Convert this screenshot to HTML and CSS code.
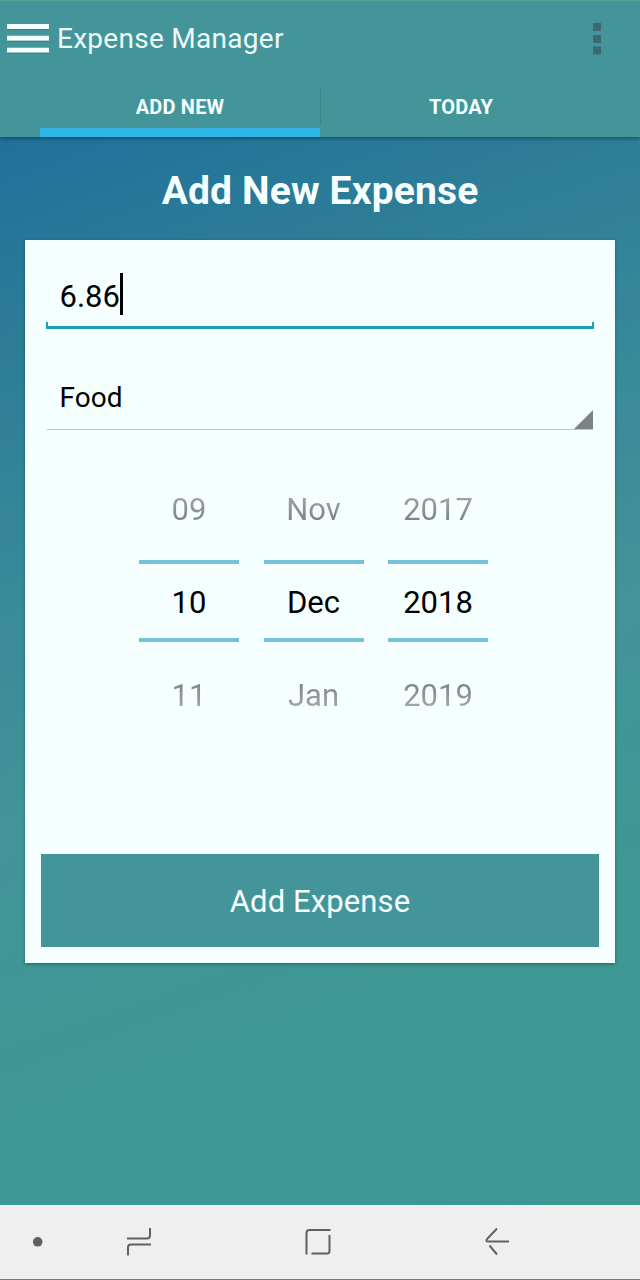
FILE: index.html
```
<!DOCTYPE html>
<html lang="en">
<head>
<meta charset="utf-8">
<title>Expense Manager</title>
<link rel="stylesheet" href="styles.css">
</head>
<body>
<div class="screen">
  <header class="header">
    <div class="bar">
      <svg class="menu" width="42" height="30" viewBox="0 0 42 30"><path d="M0 2.500h42M0 14.300h42M0 26.200h42" stroke="#f6ffff" stroke-width="5"/><path d="M0 5.500h42M0 17.300h42M0 29.200h42" stroke="#357f84"/></svg>
      <span class="title">Expense Manager</span>
      <svg class="more" width="8" height="32" viewBox="0 0 8 32"><path d="M0 0h8v8H0zM0 12h8v8H0zM0 23.500h8v8H0z" fill="#3d6a6d"/></svg>
    </div>
    <nav class="tabs">
      <div class="tab active"><span class="tab-text">ADD NEW</span></div>
      <div class="tab"><span class="tab-text">TODAY</span></div>
    </nav>
  </header>
  <main class="main">
    <h1 class="heading"><span>Add New Expense</span></h1>
    <section class="card">
      <div class="amount"><span class="amount-text">6.86</span><i class="caret"></i></div>
      <div class="select"><span class="select-text">Food</span><svg class="corner" width="19" height="19" viewBox="0 0 19 19"><path d="M19 0v19H0z" fill="#7d8283"/></svg></div>
      <div class="picker">
        <div class="column"><span class="prev">09</span><span class="current">10</span><span class="next">11</span></div>
        <div class="column"><span class="prev">Nov</span><span class="current">Dec</span><span class="next">Jan</span></div>
        <div class="column"><span class="prev">2017</span><span class="current">2018</span><span class="next">2019</span></div>
      </div>
      <div class="submit"><span>Add Expense</span></div>
    </section>
  </main>
  <footer class="navbar">
    <svg width="640" height="74" viewBox="0 0 640 74" fill="none" stroke="#606060" stroke-width="2">
      <circle cx="37.700" cy="36.800" r="4.800" fill="#606060" stroke="none"/>
      <path d="M127 33.500h20q3 0 3-3V23M151 39.500h-20q-3 0-3 3V50.500"/>
      <path d="M306.500 49.500V28q0-3 3-3H330.500M329.500 30V46q0 2.500-2.500 2.500H311.500"/>
      <path d="M497 23.500L487 34q-1.500 2.500 1 2.500H509M489.500 40.500L497 49.500"/>
    </svg>
  </footer>
</div>
</body>
</html>
```
FILE: styles.css
```
* { box-sizing: border-box; }
body { margin: 0; font-family: Roboto, "Liberation Sans", sans-serif; }
.screen { width: 640px; height: 1280px; display: flex; flex-direction: column; background: #3d9893; overflow: hidden; }
.header { height: 137px; background: #43959a; border-top: 1px solid #51a48d; box-shadow: 0 1px 4px rgba(0,30,40,.55); z-index: 1; }
.bar { height: 76px; padding: 0 39px 0 7px; display: flex; align-items: center; }
.menu { flex: none; margin-right: 8px; }
.title { flex: 1; color: #edfafa; font-size: 28px; line-height: 34px; letter-spacing: .28px; }
.more { flex: none; margin-bottom: 1px; }
.tabs { height: 60px; padding: 0 40px; display: flex; }
.tab { width: 280px; padding-top: 18px; text-align: center; color: #f4ffff; font-size: 20px; line-height: 24px; letter-spacing: .2px; font-weight: 700; border-bottom: 9px solid transparent; }
.tab + .tab { padding-left: 2px; background: linear-gradient(#388489, #388489) 0 11px / 1px 37px no-repeat; }
.active { border-bottom-color: #2fb6e7; }
.main { flex: 1; padding: 0 25px; background: linear-gradient(160deg, #20709b 0%, #2d7d98 17%, #388b98 36%, #419499 53%, #3e9793 75%, #3d9892 100%); }
.heading { margin: 0; height: 103px; padding-top: 31px; text-align: center; color: #f6ffff; font-size: 39px; line-height: 46px; letter-spacing: .15px; font-weight: 700; }
.card { height: 723px; padding: 21px 16px 16px; background: #f6ffff; box-shadow: 0 1px 3px rgba(0,40,50,.45); display: flex; flex-direction: column; }
.amount { height: 68px; margin: 0 5px 0 5px; padding: 12px 14px 0 13.5px; display: flex; background: linear-gradient(#19a0b4,#19a0b4) 0 61px / 2px 7px no-repeat, linear-gradient(#19a0b4,#19a0b4) 100% 61px / 2px 7px no-repeat, linear-gradient(#19a0b4,#19a0b4) 0 65px / 100% 3px no-repeat; }
.amount-text { font-size: 31px; line-height: 48px; }
.caret { width: 3px; height: 42px; background: #000; }
.select { height: 101px; margin: 0 6px; padding: 52px 0 0 12.5px; display: flex; justify-content: space-between; border-bottom: 1px solid #bec6c7; }
.select-text { font-size: 28px; line-height: 34px; }
.corner { align-self: flex-end; }
.picker { height: 310px; margin: 32px 0 0 98px; display: flex; gap: 24.5px; }
.column { width: 100px; text-align: center; font-size: 31px; line-height: 36px; }
.prev, .current, .next { display: block; }
.prev, .next { color: transparent; background-clip: text; -webkit-background-clip: text; }
.prev { height: 98px; padding-top: 30px; background-image: linear-gradient(#aaa 30px, #757b7c 63px); }
.current { height: 82px; padding-top: 21px; border: solid #75c3d9; border-width: 4px 0; }
.next { height: 80px; padding-top: 36px; background-image: linear-gradient(#757b7c 36px, #aaa 68px); }
.submit { height: 93px; margin-top: auto; background: #43959a; color: #f6ffff; font-size: 31px; line-height: 96px; letter-spacing: .1px; text-align: center; }
.navbar { height: 75px; background: #efefef; border-bottom: 1px solid #777; }
.navbar svg { display: block; }
```
